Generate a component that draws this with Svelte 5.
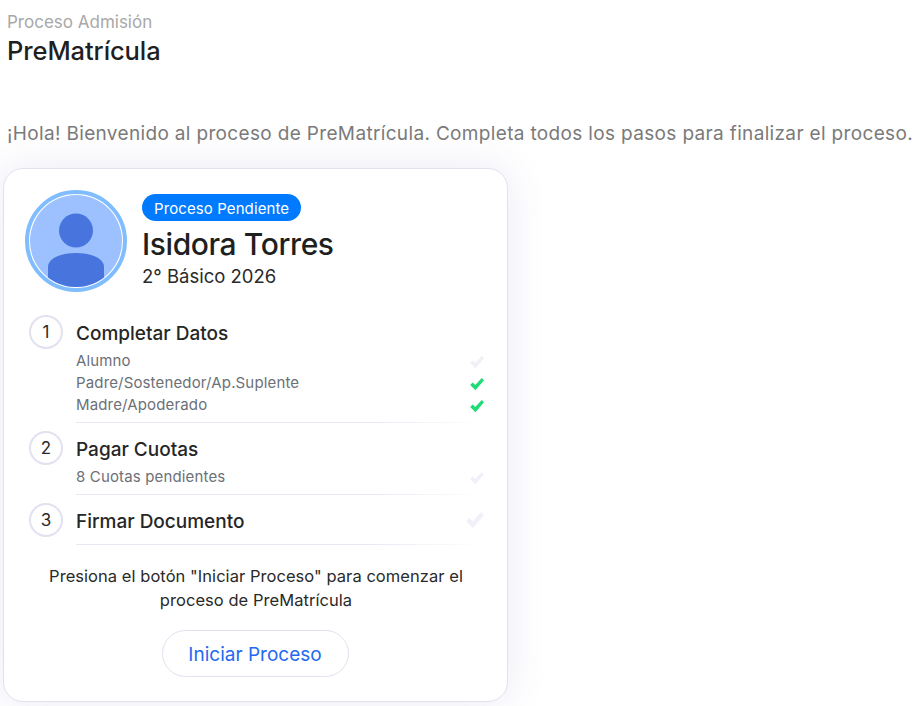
<script>
  const steps = [
    {
      n: 1,
      title: 'Completar Datos',
      items: [
        { label: 'Alumno', done: false },
        { label: 'Padre/Sostenedor/Ap.Suplente', done: true },
        { label: 'Madre/Apoderado', done: true }
      ]
    },
    { n: 2, title: 'Pagar Cuotas', items: [{ label: '8 Cuotas pendientes', done: false }] },
    { n: 3, title: 'Firmar Documento', items: [], big: true }
  ];
</script>

{#snippet check(done, big)}
  <svg class="check" class:big viewBox="0 0 16 16" aria-hidden="true">
    <path d="M0.2 9 L3 6.2 L6 9 L13.4 1 L16 3.6 L6.2 15 Z" fill={done ? '#1fdc74' : '#f0f0f8'} />
  </svg>
{/snippet}

<main>
  <header>
    <div class="crumb">Proceso Admisión</div>
    <h1>PreMatrícula</h1>
  </header>

  <p class="hello">¡Hola! Bienvenido al proceso de PreMatrícula. Completa todos los pasos para finalizar el proceso.</p>

  <section class="card">
    <div class="profile">
      <div class="avatar">
        <svg viewBox="0 0 92 92" aria-hidden="true">
          <defs>
            <clipPath id="disc"><circle cx="46" cy="46" r="46" /></clipPath>
          </defs>
          <circle cx="46" cy="46" r="46" fill="#9dc1ff" />
          <g clip-path="url(#disc)" fill="#4775dd">
            <circle cx="46" cy="35.5" r="17" />
            <path d="M18 92 V72 C18 63 31 58 46 58 C61 58 74 63 74 72 V92 Z" />
          </g>
        </svg>
      </div>
      <div class="who">
        <span class="badge">Proceso Pendiente</span>
        <h2>Isidora Torres</h2>
        <div class="grade">2° Básico 2026</div>
      </div>
    </div>

    <ol class="steps">
      {#each steps as step}
        <li class="step">
          <span class="num">{step.n}</span>
          <div class="body">
            <div class="title">
              <span>{step.title}</span>
              {#if step.big}{@render check(false, true)}{/if}
            </div>
            {#each step.items as item}
              <div class="item">
                <span>{item.label}</span>
                {@render check(item.done, false)}
              </div>
            {/each}
          </div>
        </li>
      {/each}
    </ol>

    <p class="note">Presiona el botón "Iniciar Proceso" para comenzar el proceso de PreMatrícula</p>
    <div class="action">
      <button type="button">Iniciar Proceso</button>
    </div>
  </section>
</main>

<style>
  :global(body) {
    background: #fff;
    font-family: Inter, "Liberation Sans", sans-serif;
    color: #212121;
  }

  main {
    height: 706px;
    overflow: hidden;
    box-sizing: border-box;
    padding-top: 11px;
  }

  header {
    padding-left: 7px;
  }

  .crumb {
    font-size: 17px;
    line-height: 22px;
    color: #a8a8a8;
  }

  h1 {
    margin: 2px 0 0;
    font-size: 25.5px;
    line-height: 32px;
    font-weight: 500;
    color: #1f1f1f;
    letter-spacing: -0.1px;
  }

  .hello {
    margin: 54px 0 0 7px;
    font-size: 19px;
    line-height: 26px;
    color: #7a7a7a;
    white-space: nowrap;
    letter-spacing: 0.34px;
  }

  .card {
    box-sizing: border-box;
    width: 505px;
    height: 534px;
    margin: 21px 0 0 3px;
    background: #fff;
    border: 1px solid #e2e1f0;
    border-radius: 20px;
    box-shadow: 0 0 40px rgba(80, 80, 170, 0.12);
    padding: 21px 20px 0 21px;
  }

  .profile {
    display: flex;
    align-items: flex-start;
    gap: 15px;
  }

  .avatar {
    flex: none;
    width: 92px;
    height: 92px;
    padding: 1px;
    border: 4px solid #7fbdff;
    border-radius: 50%;
    background: #fff;
  }

  .avatar svg {
    display: block;
    width: 92px;
    height: 92px;
  }

  .who {
    padding-top: 4px;
  }

  .badge {
    display: inline-block;
    padding: 0 12px;
    height: 27px;
    line-height: 29px;
    border-radius: 14px;
    background: #007bff;
    color: #fff;
    font-size: 15px;
    letter-spacing: 0.1px;
  }

  h2 {
    margin: 4px 0 0;
    font-size: 30px;
    line-height: 38px;
    font-weight: 500;
    color: #1f1f1f;
    letter-spacing: -0.4px;
  }

  .grade {
    margin-top: 1px;
    font-size: 18.5px;
    line-height: 24px;
    color: #2a2a2a;
  }

  .steps {
    list-style: none;
    margin: 23px 0 0;
    padding: 0 0 0 4px;
  }

  .step {
    display: flex;
    gap: 13px;
  }

  .num {
    flex: none;
    box-sizing: border-box;
    width: 34px;
    height: 34px;
    border: 2px solid #e2e1f0;
    border-radius: 50%;
    text-align: center;
    font-size: 17px;
    line-height: 30px;
    color: #2a2a2a;
  }

  .body {
    flex: 1;
    min-width: 0;
    margin-bottom: 8px;
    padding-bottom: 7px;
    border-bottom: 1px solid;
    border-image: linear-gradient(to right, #e8e7f3 70%, #fff 98%) 1;
  }

  .step:last-child .body {
    margin-bottom: 0;
  }

  .title {
    display: flex;
    justify-content: space-between;
    align-items: center;
    box-sizing: border-box;
    height: 34px;
    padding: 2px 3px 0 0;
    font-size: 19px;
    font-weight: 500;
    color: #262626;
  }

  .item {
    display: flex;
    justify-content: space-between;
    align-items: center;
    height: 22px;
    font-size: 15px;
    letter-spacing: 0.15px;
    color: #6c7077;
    padding-right: 3px;
  }

  .check {
    display: block;
    width: 14px;
    height: 14px;
    flex: none;
    position: relative;
    top: 2px;
  }

  .check.big {
    width: 18px;
    height: 18px;
    top: -1px;
  }

  .note {
    margin: 19px auto 0;
    width: 430px;
    text-align: center;
    font-size: 16.5px;
    line-height: 24px;
    letter-spacing: 0.05px;
    color: #2a2a2a;
  }

  .action {
    display: flex;
    justify-content: center;
    margin-top: 18px;
    padding-right: 2px;
  }

  button {
    width: 187px;
    height: 47px;
    padding: 2px 0 0;
    background: #fff;
    border: 1px solid #e2e1f0;
    border-radius: 24px;
    font: inherit;
    font-size: 19px;
    color: #2468f2;
  }
</style>
